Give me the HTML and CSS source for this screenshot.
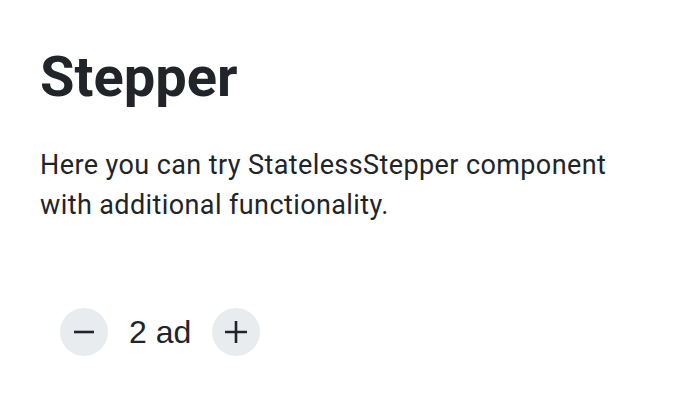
FILE: index.html
```html
<!DOCTYPE html>
<html>
<head>
<meta charset="utf-8">
<link rel="stylesheet" href="styles.css">
</head>
<body>
<main class="page">
  <h1 class="title">Stepper</h1>
  <p class="desc">Here you can try StatelessStepper component with additional functionality.</p>
  <div class="demo">
    <div class="stepper">
      <button class="step-btn" aria-label="decrease">
        <svg width="26" height="26" viewBox="0 0 26 26"><path d="M3 13h20" stroke="#212529" stroke-width="2.6" fill="none"/></svg>
      </button>
      <span class="value">2 ad</span>
      <button class="step-btn" aria-label="increase">
        <svg width="26" height="26" viewBox="0 0 26 26"><path d="M2 13h22M13 2v22" stroke="#212529" stroke-width="2.6" fill="none"/></svg>
      </button>
    </div>
  </div>
</main>
</body>
</html>
```
FILE: styles.css
```css
* { box-sizing: border-box; }
html, body { margin: 0; background: #fff; }
body { font-family: Roboto, "Liberation Sans", sans-serif; color: #212529; }
.page { padding: 43px 40px 0; }
.title { margin: 0; font-size: 56px; font-weight: 700; line-height: 68px; }
.desc { margin: 34px 0 0; font-size: 27px; line-height: 40px; letter-spacing: 0.4px; }
.demo { padding: 20px; margin-top: 63px; }
.stepper { display: flex; align-items: center; gap: 21px; }
.step-btn { width: 48px; height: 48px; border-radius: 50%; border: none; background: #e9ecef; display: flex; align-items: center; justify-content: center; padding: 0; }
.value { font-family: "Liberation Sans", Arial, sans-serif; font-size: 32px; line-height: 40px; }
```
